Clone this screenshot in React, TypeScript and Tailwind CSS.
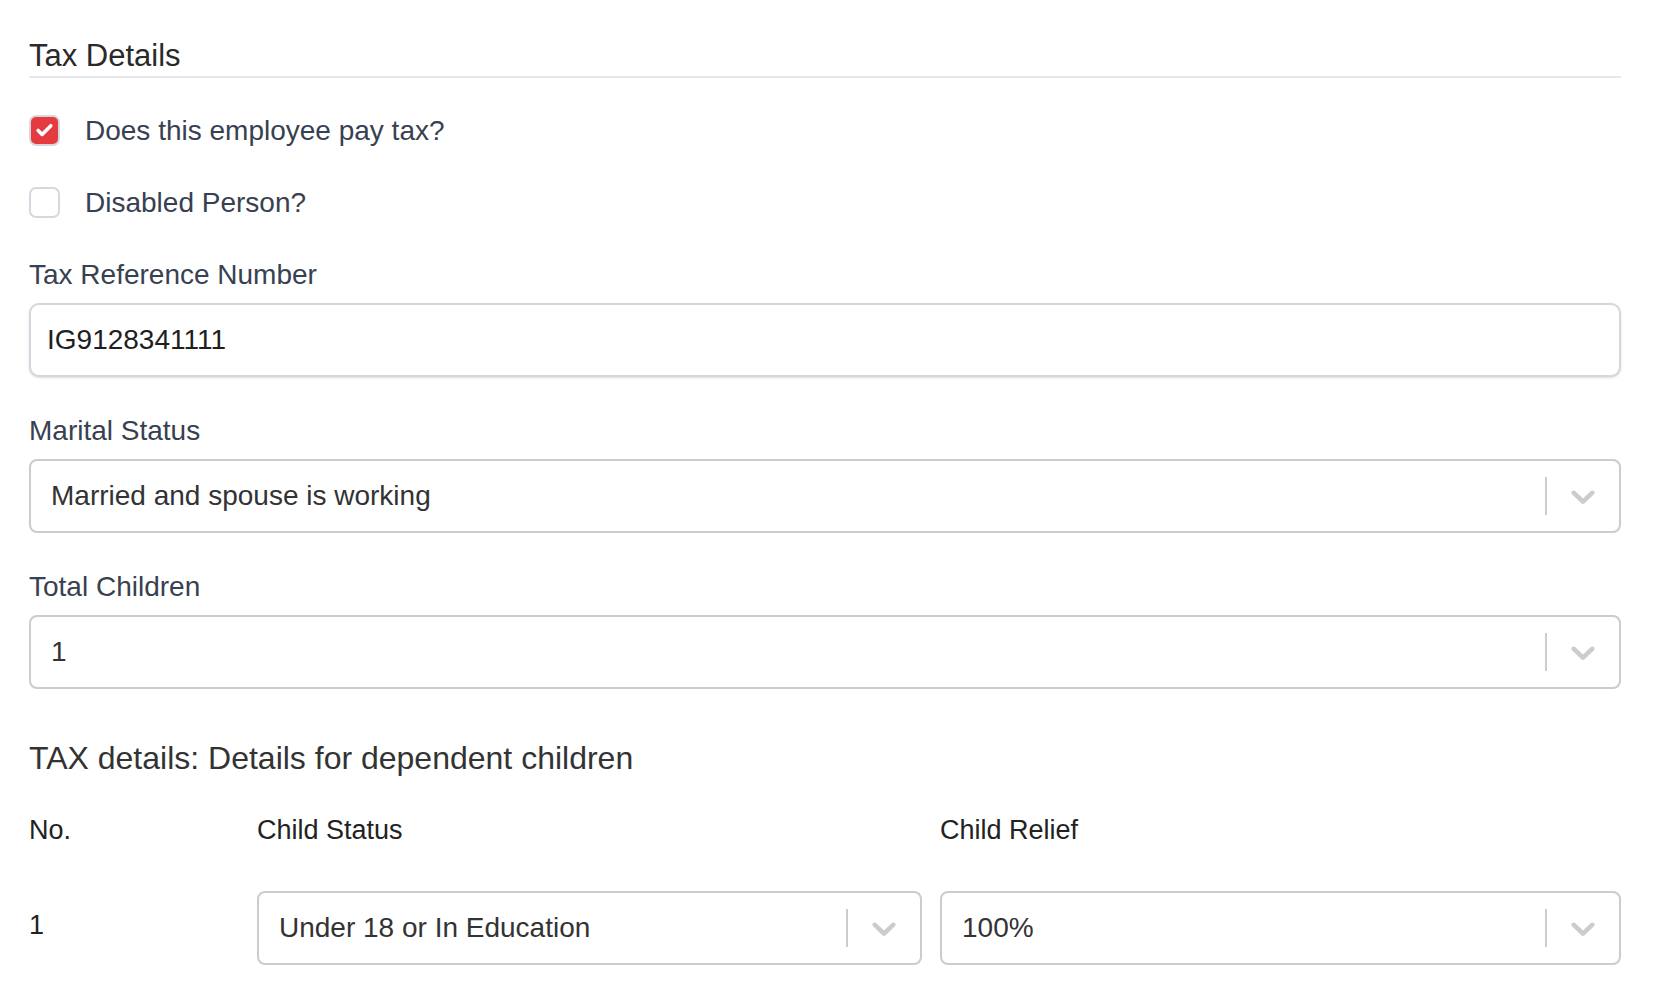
import { Check } from "lucide-react";

// react-select style chevron, drawn at 2x
function Chevron() {
  return (
    <svg width="40" height="40" viewBox="0 0 20 20" fill="#cccccc" aria-hidden="true">
      <path d="M4.516 7.548c0.436-0.446 1.043-0.481 1.576 0l3.908 3.747 3.908-3.747c0.533-0.481 1.141-0.446 1.574 0 0.436 0.445 0.408 1.197 0 1.615-0.406 0.418-4.695 4.502-4.695 4.502-0.217 0.223-0.502 0.335-0.787 0.335s-0.57-0.112-0.789-0.335c0 0-4.287-4.084-4.695-4.502s-0.436-1.17 0-1.615z" />
    </svg>
  );
}

function Select({ value, className = "" }: { value: string; className?: string }) {
  return (
    <div
      className={`flex h-[74px] items-stretch rounded-[8px] border-2 border-[#cccccc] bg-white ${className}`}
    >
      <div className="flex flex-1 items-center px-[16px]">
        <span className="ml-[4px] text-[28px] text-[#333333]">{value}</span>
      </div>
      <div className="flex items-center">
        <span className="my-[16px] w-[2px] self-stretch bg-[#cccccc]" />
        <div className="flex items-center p-[16px]">
          <Chevron />
        </div>
      </div>
    </div>
  );
}

function Checkbox({ label, checked }: { label: string; checked?: boolean }) {
  return (
    <label className="flex h-[31px] items-center gap-[25px]">
      {checked ? (
        <span className="flex h-[31px] w-[31px] items-center justify-center rounded-[7px] border-2 border-[#d5d8de] bg-[#e53a40]">
          <Check size={19} strokeWidth={4.5} className="text-white" />
        </span>
      ) : (
        <span className="h-[31px] w-[31px] rounded-[7px] border-2 border-[#d5d8de] bg-white" />
      )}
      <span className="text-[28px] leading-[30px] text-[#374151]">{label}</span>
    </label>
  );
}

function FieldLabel({ children }: { children: string }) {
  return <div className="text-[28px] leading-[32px] text-[#374151]">{children}</div>;
}

export default function App() {
  return (
    <div
      className="min-h-screen bg-white pl-[29px] pr-[38px] pt-[36px]"
      style={{ fontFamily: '"Liberation Sans", Arial, sans-serif' }}
    >
      <h2 className="border-b-2 border-[#e6e6ed] text-[31px] leading-[40px] text-[#2a2a2a]">
        Tax Details
      </h2>

      <div className="mt-[37px] flex flex-col gap-[41px]">
        <Checkbox label="Does this employee pay tax?" checked />
        <Checkbox label="Disabled Person?" />
      </div>

      <div className="mt-[41px]">
        <FieldLabel>Tax Reference Number</FieldLabel>
        <div className="mt-[12px] flex h-[74px] items-center rounded-[10px] border-2 border-[#d3d7de] bg-white px-[16px] shadow-sm">
          <span className="text-[28px] text-[#1f1f1f]">IG9128341111</span>
        </div>
      </div>

      <div className="mt-[38px]">
        <FieldLabel>Marital Status</FieldLabel>
        <Select value="Married and spouse is working" className="mt-[12px]" />
      </div>

      <div className="mt-[38px]">
        <FieldLabel>Total Children</FieldLabel>
        <Select value="1" className="mt-[12px]" />
      </div>

      <h3 className="mt-[49px] text-[32px] leading-[40px] text-[#333333]">
        TAX details: Details for dependent children
      </h3>

      <div className="mt-[36px] flex text-[27px] leading-[32px] text-[#222222]">
        <div className="w-[228px]">No.</div>
        <div className="w-[665px]">Child Status</div>
        <div className="ml-[18px] flex-1">Child Relief</div>
      </div>

      <div className="mt-[45px] flex items-start">
        <div className="w-[228px] pt-[18px] text-[27px] leading-[32px] text-[#222222]">1</div>
        <Select value="Under 18 or In Education" className="w-[665px]" />
        <Select value="100%" className="ml-[18px] flex-1" />
      </div>
    </div>
  );
}
